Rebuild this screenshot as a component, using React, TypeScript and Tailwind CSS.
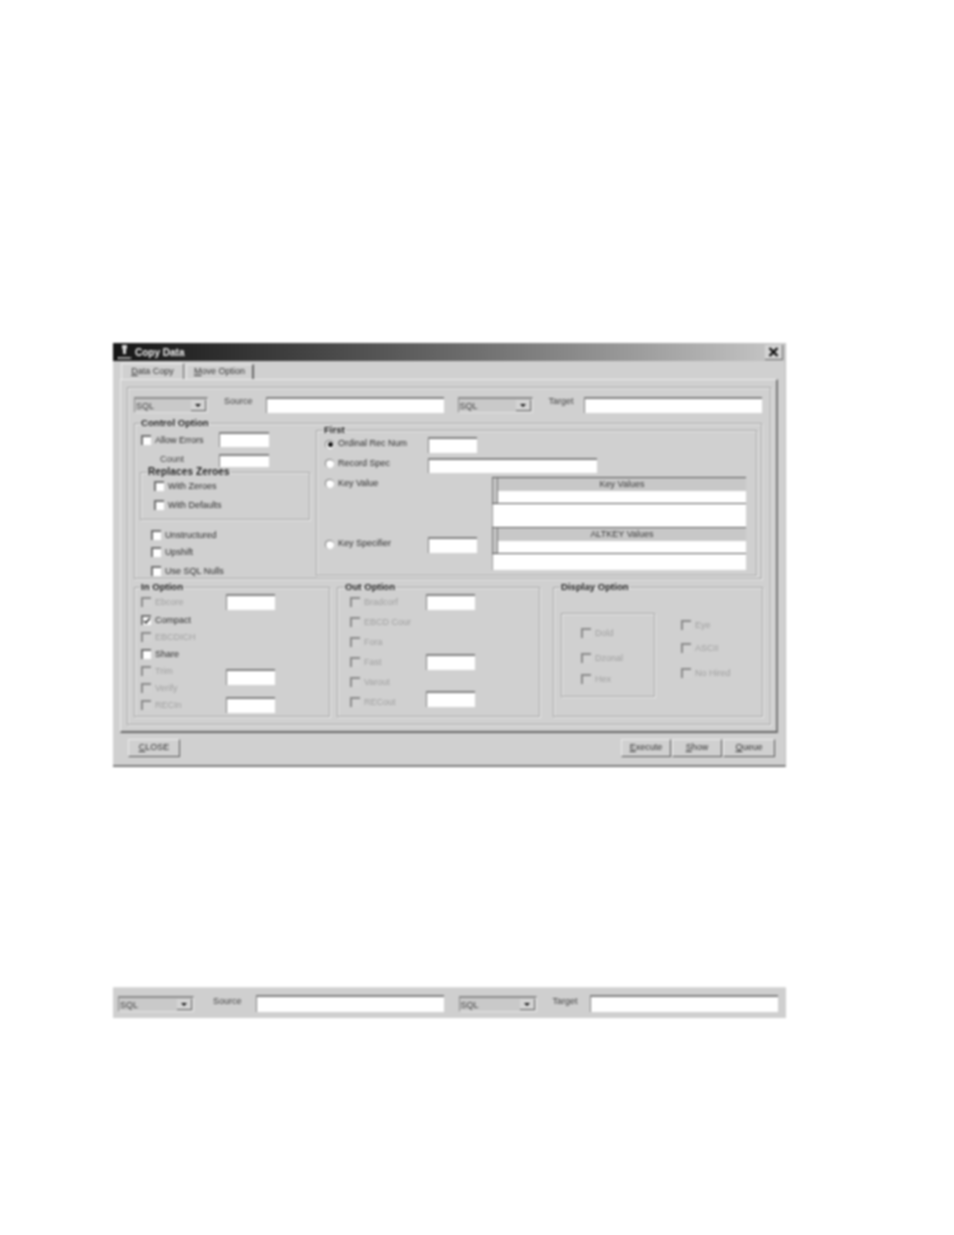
import type { ReactNode } from 'react';

const etched = 'border border-[#a6a6a6] shadow-[1px_1px_0_#ececec,inset_1px_1px_0_#ececec]';

function Field({ className = '' }: { className?: string }) {
  return <div className={`shrink-0 bg-white border-t-2 border-l border-[#808080] ${className}`} />;
}

function Check({ label, disabled = false, checked = false }: { label: string; disabled?: boolean; checked?: boolean }) {
  return (
    <div className="flex items-center">
      <div
        className={`w-[10px] h-[10px] shrink-0 border-t-2 border-l-2 flex items-center justify-center ${
          disabled ? 'bg-[#d2d2d2] border-[#8a8a8a]' : 'bg-white border-[#707070]'
        }`}
      >
        {checked && (
          <svg width="8" height="8" viewBox="0 0 8 8">
            <path d="M1 4l2 2 4-5" fill="none" stroke="#222" strokeWidth="1.5" />
          </svg>
        )}
      </div>
      <span className={`ml-[4px] pt-[2px] whitespace-nowrap ${disabled ? 'text-[#a0a0a0]' : 'text-[#2c2c2c]'}`}>{label}</span>
    </div>
  );
}

function Radio({ label, on = false }: { label: string; on?: boolean }) {
  return (
    <div className="flex items-center">
      <div className="w-[9px] h-[9px] shrink-0 rounded-full bg-white border-t border-l border-[#777] flex items-center justify-center">
        {on && <div className="w-[5px] h-[5px] rounded-full bg-[#111]" />}
      </div>
      <span className="ml-[4px] whitespace-nowrap text-[#2c2c2c]">{label}</span>
    </div>
  );
}

function Group({
  title,
  className = '',
  legend = 'ml-[6px] text-[9.6px]',
  children,
}: {
  title: string;
  className?: string;
  legend?: string;
  children: ReactNode;
}) {
  return (
    <fieldset className={`${etched} ${className}`}>
      <legend className={`px-[1px] h-[12px] leading-[12px] font-bold text-[#222] whitespace-nowrap ${legend}`}>{title}</legend>
      {children}
    </fieldset>
  );
}

function SqlSelect({ className = '' }: { className?: string }) {
  return (
    <div className={`shrink-0 flex items-stretch border-t-2 border-l border-[#8c8c8c] border-b border-r border-b-[#e4e4e4] border-r-[#e4e4e4] bg-[#c9c9c9] ${className}`}>
      <span className="flex-1 pl-[1px] leading-[14px] text-[#444]">SQL</span>
      <div className="w-[15px] my-[1px] mr-[1px] bg-[#d4d4d4] border-r border-b border-[#666] flex items-center justify-center">
        <div className="w-0 h-0 border-x-[3px] border-x-transparent border-t-[3px] border-t-[#111]" />
      </div>
    </div>
  );
}

function KeyGrid({ title, bottom }: { title: string; bottom: string }) {
  return (
    <div className="w-[254px] bg-white">
      <div className="flex h-[27px] border-t border-[#555]">
        <div className="w-[6px] shrink-0 bg-[#c4c4c4] border-x border-[#777] border-b border-b-[#444]" />
        <div className="flex-1 flex flex-col">
          <div className="h-[13px] bg-[#c8c8c8] text-center leading-[13px] text-[#3a3a3a]">{title}</div>
          <div className="flex-1 bg-white border-b border-[#555]" />
        </div>
      </div>
      <div className={`${bottom} border-l border-[#999]`} />
    </div>
  );
}

function DialogButton({ hot, rest, className = '' }: { hot: string; rest: string; className?: string }) {
  return (
    <div className={`h-[18px] flex items-center justify-center border-t border-l border-[#ececec] border-r border-b border-r-[#555] border-b-[#555] text-[#333] ${className}`}>
      <span>
        <span className="underline">{hot}</span>
        {rest}
      </span>
    </div>
  );
}

function SourceRow({ wide = false }: { wide?: boolean }) {
  if (wide) {
    return (
      <div className="w-[673px] h-[31px] bg-[#cfcfcf] flex pl-[5px] pt-[8px] border-t border-[#dcdcdc]">
        <SqlSelect className="w-[76px] h-[16px]" />
        <span className="ml-[19px] -mt-[2px] leading-[14px] text-[#444]">Source</span>
        <Field className="ml-[14px] w-[188px] h-[17px] -mt-[1px]" />
        <SqlSelect className="ml-[15px] w-[78px] h-[16px]" />
        <span className="ml-[16px] -mt-[2px] leading-[14px] text-[#444]">Target</span>
        <Field className="ml-[12px] w-[188px] h-[17px] -mt-[1px]" />
      </div>
    );
  }
  return (
    <div className="flex h-[16px]">
      <SqlSelect className="w-[74px] h-[16px]" />
      <span className="ml-[16px] -mt-[3px] leading-[14px] text-[#444]">Source</span>
      <Field className="ml-[13px] w-[178px] h-[16px]" />
      <SqlSelect className="ml-[14px] w-[75px] h-[16px]" />
      <span className="ml-[16px] -mt-[3px] leading-[14px] text-[#444]">Target</span>
      <Field className="ml-[10px] w-[178px] h-[16px]" />
    </div>
  );
}

export default function App() {
  return (
    <div className="w-[954px] h-[1235px] overflow-hidden bg-white pt-[343px] pl-[113px] text-[9px] font-['Liberation_Sans',Arial,sans-serif] blur-[0.8px]">
      {/* dialog */}
      <div className="w-[673px] h-[424px] bg-[#d0d0d0] flex flex-col border-b-2 border-[#7c7c7c] border-r border-r-[#bcbcbc]">
        <div className="h-[18px] shrink-0 flex items-center bg-gradient-to-r from-[#161616] to-[#c8c8c8]">
          <svg className="ml-[4px]" width="15" height="16" viewBox="0 0 15 16">
            <path d="M5 1h5v3l-1 2v4H6V6L5 4z" fill="#d8d8d8" />
            <path d="M1 14h13" stroke="#e4e4e4" strokeWidth="2" strokeDasharray="2 1" />
          </svg>
          <span className="ml-[3px] text-[10px] font-bold text-[#f0f0f0]">Copy Data</span>
          <div className="ml-auto mr-[2px] w-[18px] h-[15px] bg-[#d4d4d4] border-r border-b border-[#666] flex items-center justify-center">
            <svg width="11" height="10" viewBox="0 0 11 10">
              <path d="M1.5 1l8 8M9.5 1l-8 8" stroke="#111" strokeWidth="2.4" />
            </svg>
          </div>
        </div>

        {/* tabs */}
        <div className="h-[18px] shrink-0 flex items-end pl-[8px] pt-[2px]">
          <div className="w-[63px] h-[16px] flex items-center justify-center border-t border-l border-[#efefef] border-r border-r-[#666] text-[#333]">
            <span><span className="underline">D</span>ata Copy</span>
          </div>
          <div className="ml-[2px] w-[68px] h-[15px] flex items-center justify-center border-t border-l border-[#e8e8e8] border-r-2 border-r-[#666] text-[#333]">
            <span><span className="underline">M</span>ove Option</span>
          </div>
        </div>

        {/* tab panel */}
        <div className="ml-[7px] w-[658px] h-[354px] shrink-0 border-t border-l border-[#ececec] border-r-2 border-b-2 border-r-[#777] border-b-[#666] pt-[7px] pl-[6px]">
          <div className={`w-[644px] h-[338px] ${etched} pl-[6px] pt-[9px]`}>
            <SourceRow />

            <Group title="Control Option" legend="ml-[5px] text-[9.6px]" className="mt-[4px] w-[628px] h-[162px]">
              <div className="flex">
                <div className="w-[181px] shrink-0 pl-[6px]">
                  <div className="flex items-center h-[15px] mt-[3px]">
                    <div className="w-[78px]"><Check label="Allow Errors" /></div>
                    <Field className="w-[50px] h-[15px]" />
                  </div>
                  <div className="flex items-center h-[13px] mt-[7px]">
                    <span className="ml-[19px] w-[59px] mb-[2px] text-[#444]">Count</span>
                    <Field className="w-[50px] h-[13px]" />
                  </div>
                  <Group title="Replaces Zeroes" legend="ml-[6px] text-[10px] tracking-[0.15px]" className="-ml-[1px] -mt-[1px] w-[170px] h-[54px]">
                    <div className="pl-[13px]">
                      <div className="h-[12px]"><Check label="With Zeroes" /></div>
                      <div className="h-[12px] mt-[7px]"><Check label="With Defaults" /></div>
                    </div>
                  </Group>
                  <div className="pl-[10px] mt-[7px]">
                    <div className="h-[12px]"><Check label="Unstructured" /></div>
                    <div className="h-[12px] mt-[5px]"><Check label="Upshift" /></div>
                    <div className="h-[12px] mt-[7px]"><Check label="Use SQL Nulls" /></div>
                  </div>
                </div>

                <Group title="First" className="-mt-[5px] w-[441px] h-[152px]">
                  <div className="pl-[8px] pt-[1px] flex items-center h-[17px]">
                    <div className="w-[103px] mb-[2px]"><Radio label="Ordinal Rec Num" on /></div>
                    <Field className="w-[49px] h-[16px]" />
                  </div>
                  <div className="pl-[8px] mt-[5px] flex items-center h-[15px]">
                    <div className="w-[103px] mb-[4px]"><Radio label="Record Spec" /></div>
                    <Field className="w-[169px] h-[15px]" />
                  </div>
                  <div className="flex mt-[4px]">
                    <div className="w-[175px] shrink-0 pl-[8px]">
                      <div className="h-[12px]"><Radio label="Key Value" /></div>
                      <div className="mt-[48px] flex items-center h-[16px]">
                        <div className="w-[103px] mb-[2px]"><Radio label="Key Specifier" /></div>
                        <Field className="w-[49px] h-[16px]" />
                      </div>
                    </div>
                    <div>
                      <KeyGrid title="Key Values" bottom="h-[23px]" />
                      <KeyGrid title="ALTKEY Values" bottom="h-[16px]" />
                    </div>
                  </div>
                </Group>
              </div>
            </Group>

            <div className="flex mt-[2px]">
              <Group title="In Option" legend="ml-[5px] text-[9.6px]" className="w-[196px] h-[136px]">
                <div className="pl-[6px] grid grid-cols-[85px_49px] grid-rows-[18px_18px_16px_18px_16px_18px_16px] items-center">
                  <Check label="Ebcore" disabled />
                  <Field className="h-[16px]" />
                  <div className="col-span-2"><Check label="Compact" checked /></div>
                  <div className="col-span-2"><Check label="EBCDICH" disabled /></div>
                  <div className="col-span-2"><Check label="Share" /></div>
                  <Check label="Trim" disabled />
                  <Field className="h-[16px] row-span-2 -mt-[6px]" />
                  <Check label="Verify" disabled />
                  <Check label="RECIn" disabled />
                  <Field className="h-[16px]" />
                </div>
              </Group>

              <Group title="Out Option" className="ml-[7px] w-[203px] h-[136px]">
                <div className="pl-[12px] -mt-[1px] grid grid-cols-[76px_49px] auto-rows-[20px] items-center">
                  <Check label="Bradcorf" disabled />
                  <Field className="h-[16px]" />
                  <div className="col-span-2"><Check label="EBCD Cour" disabled /></div>
                  <div className="col-span-2"><Check label="Fora" disabled /></div>
                  <Check label="Fast" disabled />
                  <Field className="h-[16px]" />
                  <div className="col-span-2"><Check label="Varout" disabled /></div>
                  <Check label="RECout" disabled />
                  <Field className="h-[16px] -mt-[6px]" />
                </div>
              </Group>

              <Group title="Display Option" className="ml-[13px] w-[210px] h-[136px]">
                <div className="flex">
                  <div className={`ml-[7px] mt-[20px] w-[94px] h-[84px] ${etched} pl-[19px] pt-[11px]`}>
                    <div className="h-[12px]"><Check label="Dold" disabled /></div>
                    <div className="h-[12px] mt-[13px]"><Check label="Dzonal" disabled /></div>
                    <div className="h-[12px] mt-[9px]"><Check label="Hex" disabled /></div>
                  </div>
                  <div className="ml-[26px] mt-[24px]">
                    <div className="h-[12px]"><Check label="Eye" disabled /></div>
                    <div className="h-[12px] mt-[11px]"><Check label="ASCII" disabled /></div>
                    <div className="h-[12px] mt-[13px]"><Check label="No Hired" disabled /></div>
                  </div>
                </div>
              </Group>
            </div>
          </div>
        </div>

        {/* bottom buttons */}
        <div className="flex pt-[6px] pl-[15px]">
          <DialogButton hot="C" rest="LOSE" className="w-[52px]" />
          <DialogButton hot="E" rest="xecute" className="ml-[441px] w-[50px]" />
          <DialogButton hot="S" rest="how" className="ml-[1px] w-[50px]" />
          <DialogButton hot="Q" rest="ueue" className="ml-[1px] w-[52px]" />
        </div>
      </div>

      {/* lower strip */}
      <div className="mt-[220px]">
        <SourceRow wide />
      </div>
    </div>
  );
}
